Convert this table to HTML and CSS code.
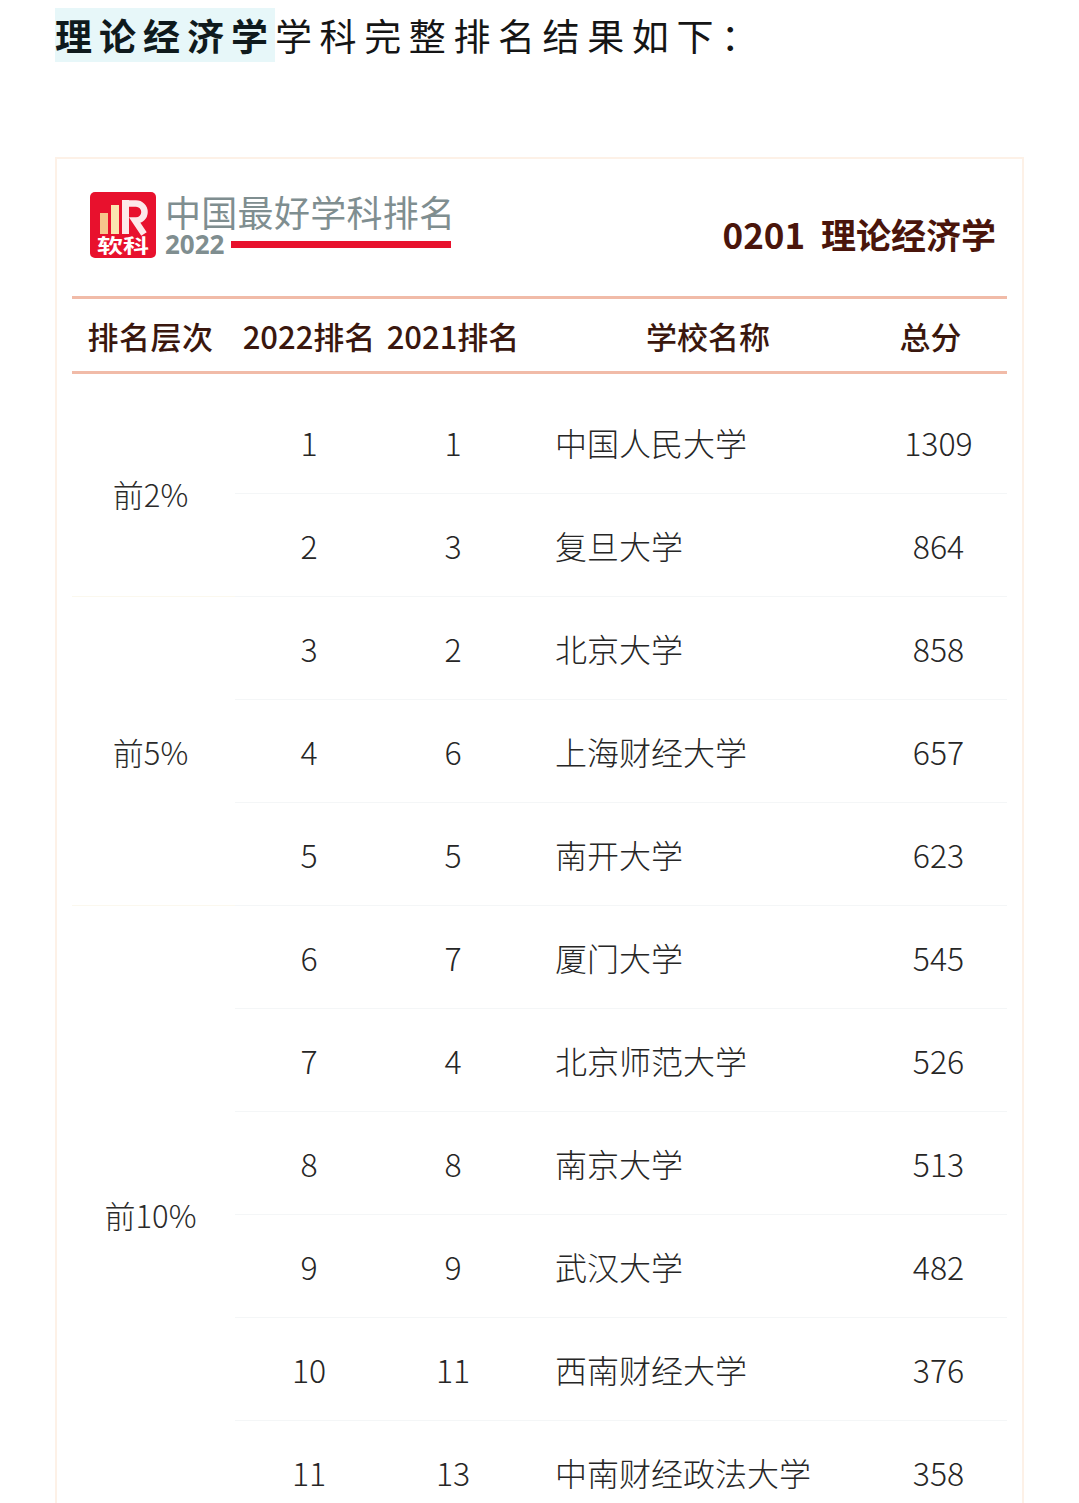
FILE: index.html
```html
<!DOCTYPE html>
<html lang="zh-CN">
<head>
<meta charset="utf-8">
<title>理论经济学学科完整排名</title>
<link rel="stylesheet" href="styles.css">
</head>
<body>
<p class="intro"><span class="hl">理论经济学</span>学科完整排名结果如下：</p>
<div class="card">
  <div class="card-head">
    <div class="brand">
      <svg class="logo" width="66" height="66" viewBox="0 0 66 66">
        <rect x="0" y="0" width="66" height="66" rx="5" fill="#e8112d"/>
        <rect x="10" y="21" width="8" height="21" fill="#f6c58c"/>
        <rect x="21" y="13" width="8" height="29" fill="#fbe6b0"/>
        <rect x="32" y="8" width="7" height="34" fill="#fde9ea"/>
        <path d="M39 11.5 H46 A8.5 8.5 0 0 1 46 28.5 H45 L54 42" fill="none" stroke="#fde9ea" stroke-width="6.5"/>
        <text x="7" y="61" textLength="52" lengthAdjust="spacingAndGlyphs" class="logo-text">软科</text>
      </svg>
      <div class="brand-text">
        <div class="brand-name">中国最好学科排名</div>
        <div class="brand-year"><span class="year">2022</span><span class="bar"></span></div>
      </div>
    </div>
    <div class="subject">0201&nbsp;&nbsp;理论经济学</div>
  </div>
  <div class="table">
    <div class="th c1">排名层次</div>
    <div class="th c2">2022排名</div>
    <div class="th c3">2021排名</div>
    <div class="th c4">学校名称</div>
    <div class="th c5">总分</div>

    <div class="grp span2">前2%</div>
    <div class="td num">1</div><div class="td num">1</div><div class="td name">中国人民大学</div><div class="td num">1309</div>
    <div class="td num">2</div><div class="td num">3</div><div class="td name">复旦大学</div><div class="td num">864</div>

    <div class="grp span3">前5%</div>
    <div class="td num">3</div><div class="td num">2</div><div class="td name">北京大学</div><div class="td num">858</div>
    <div class="td num">4</div><div class="td num">6</div><div class="td name">上海财经大学</div><div class="td num">657</div>
    <div class="td num">5</div><div class="td num">5</div><div class="td name">南开大学</div><div class="td num">623</div>

    <div class="grp span6">前10%</div>
    <div class="td num">6</div><div class="td num">7</div><div class="td name">厦门大学</div><div class="td num">545</div>
    <div class="td num">7</div><div class="td num">4</div><div class="td name">北京师范大学</div><div class="td num">526</div>
    <div class="td num">8</div><div class="td num">8</div><div class="td name">南京大学</div><div class="td num">513</div>
    <div class="td num">9</div><div class="td num">9</div><div class="td name">武汉大学</div><div class="td num">482</div>
    <div class="td num">10</div><div class="td num">11</div><div class="td name">西南财经大学</div><div class="td num">376</div>
    <div class="td num">11</div><div class="td num">13</div><div class="td name">中南财经政法大学</div><div class="td num">358</div>
  </div>
</div>
</body>
</html>
```

FILE: styles.css
```css
html, body {
  margin: 0;
  padding: 0;
  background: #ffffff;
}
body {
  font-family: "Noto Sans CJK SC", "Noto Sans", sans-serif;
  color: #222;
}
.intro {
  margin: 9px 0 0 55px;
  font-size: 37px;
  line-height: 53px;
  letter-spacing: 7.6px;
  color: #151515;
  white-space: nowrap;
}
.hl {
  font-weight: 700;
  background: #e7f7f9;
  color: #0f1a1d;
  letter-spacing: 7px;
}
.card {
  box-sizing: border-box;
  width: 969px;
  margin: 95px 0 0 55px;
  border: 2px solid #fdf1e7;
  border-bottom: none;
  padding: 0 15px 40px;
}
.card-head {
  height: 137px;
  display: flex;
  align-items: center;
  justify-content: space-between;
  border-bottom: 3px solid #f1bba8;
}
.brand {
  display: flex;
  align-items: center;
  margin-left: 18px;
  margin-top: -6px;
}
.logo {
  display: block;
  margin-right: 9px;
}
.logo-text {
  font-family: "Noto Sans CJK SC", sans-serif;
  font-size: 19px;
  font-weight: 700;
  fill: #ffffff;
}
.brand-text {
  display: flex;
  flex-direction: column;
}
.brand-name {
  font-size: 36px;
  line-height: 38px;
  color: #7f8e90;
  letter-spacing: 0.3px;
  white-space: nowrap;
}
.brand-year {
  display: flex;
  align-items: center;
  height: 28px;
}
.year {
  font-family: "Noto Sans", sans-serif;
  font-size: 26px;
  font-weight: 700;
  color: #7f8e90;
  line-height: 28px;
}
.bar {
  display: block;
  width: 220px;
  height: 7px;
  margin-left: 6px;
  margin-top: 2px;
  background: #e8112d;
}
.subject {
  font-size: 35px;
  font-weight: 700;
  color: #4a150b;
  margin-right: 11px;
  margin-top: 12px;
}
.table {
  display: grid;
  grid-template-columns: 163px 148px 140px 347px 137px;
}
.th {
  height: 72px;
  display: flex;
  align-items: center;
  justify-content: center;
  font-size: 31px;
  font-weight: 500;
  color: #3a170e;
  border-bottom: 3px solid #f1bba8;
  margin-bottom: 17px;
}
.th.c1 {
  padding-right: 6px;
  letter-spacing: 0.5px;
}
.th.c4 {
  justify-content: flex-start;
  padding-left: 123px;
}
.th.c5 {
  padding-right: 16px;
}
.grp {
  display: flex;
  align-items: center;
  justify-content: center;
  font-size: 31px;
  font-weight: 300;
  color: #2a2a2a;
  padding-right: 6px;
  border-bottom: 1px solid #fbf8ee;
}
.span2 { grid-row: span 2; }
.span3 { grid-row: span 3; }
.span6 { grid-row: span 6; }
.td {
  height: 102px;
  display: flex;
  align-items: center;
  font-size: 32px;
  font-weight: 300;
  color: #262626;
  border-bottom: 1px solid #f4f6f7;
}
.td.num {
  justify-content: center;
}
.td.name {
  padding-left: 32px;
}
```
